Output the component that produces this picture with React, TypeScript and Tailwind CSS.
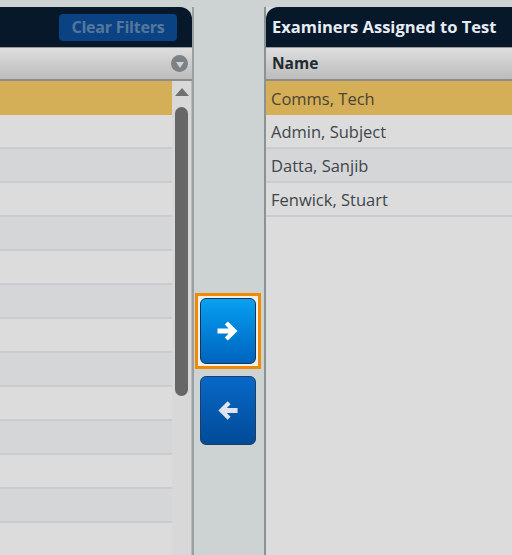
import React from 'react';

const assigned = ['Comms, Tech', 'Admin, Subject', 'Datta, Sanjib', 'Fenwick, Stuart'];

const Arrow: React.FC<{ dir: 'left' | 'right'; className?: string }> = ({ dir, className }) => (
  <svg viewBox="0 0 24 24" className={className} style={{ transform: dir === 'left' ? 'scaleX(-1)' : undefined }}>
    <path d="M1.5 9.4h11.2l-3.9-3.9 3.1-3.1 9.6 9.6-9.6 9.6-3.1-3.1 3.9-3.9H1.5z" fill="currentColor" />
  </svg>
);

export default function App() {
  const leftRows = Array.from({ length: 14 });

  return (
    <div
      className="w-[512px] h-[555px] overflow-hidden bg-[#cdd3d3] flex"
      style={{ fontFamily: '"Open Sans", "Liberation Sans", sans-serif' }}
    >
      {/* Available examiners (cut off) */}
      <div className="w-[194px] shrink-0 mt-[7px] flex flex-col border-r-2 border-[#98a0a2]">
        <div className="h-[40px] bg-[#06182a] rounded-tr-[12px] flex items-center justify-end pr-[15px]">
          <div className="h-[27px] w-[118px] rounded-[4px] bg-[#0b4283] flex items-center justify-center text-[16px] font-bold text-[#56779c] tracking-[-0.2px]">
            Clear Filters
          </div>
        </div>
        <div className="h-[34px] border-t border-[#9a9a9a] border-b-2 border-b-[#8c8c8c] bg-gradient-to-b from-[#dedede] to-[#bcbcbc] flex items-center justify-end pr-[4px]">
          <div className="w-[17px] h-[17px] rounded-full bg-[#7c8186] flex items-center justify-center">
            <div className="w-0 h-0 border-l-[4px] border-r-[4px] border-t-[6px] border-l-transparent border-r-transparent border-t-[#d0d3d6] mt-[2px]" />
          </div>
        </div>
        <div className="flex flex-1 min-h-0">
          <div className="flex-1 flex flex-col">
            {leftRows.map((_, i) => (
              <div
                key={i}
                className={
                  i === 0
                    ? 'h-[34px] shrink-0 bg-[#d4af57] border-b border-[#d4af57]'
                    : i % 2 === 1
                    ? 'h-[34px] shrink-0 bg-[#dcdcdc] border-b-2 border-[#c9cbce]'
                    : 'h-[34px] shrink-0 bg-[#d5d6d8] border-b-2 border-[#c9cbce]'
                }
              />
            ))}
          </div>
          <div className="w-[20px] shrink-0 bg-[#d8d8d8] flex flex-col items-center pt-[7px] border-r border-[#b8bcbe]">
            <div className="w-0 h-0 border-l-[7px] border-r-[7px] border-b-[8px] border-l-transparent border-r-transparent border-b-[#707070]" />
            <div className="w-[13px] h-[289px] mt-[11px] rounded-full bg-[#666666]" />
          </div>
        </div>
      </div>

      {/* Move buttons */}
      <div className="w-[70px] shrink-0 flex flex-col items-center pt-[293px] pr-[3px]">
        <div className="border-[3px] border-[#f18a00] p-[2px] bg-[#eef0f0]">
          <div className="w-[56px] h-[66px] rounded-[6px] border border-[#1b3550] bg-gradient-to-b from-[#0aa0f2] to-[#0064be] flex items-center justify-center text-white">
            <Arrow dir="right" className="w-[24px] h-[24px]" />
          </div>
        </div>
        <div className="mt-[7px] w-[56px] h-[69px] rounded-[6px] border border-[#1e3e66] bg-gradient-to-b from-[#0868c8] to-[#024b98] flex items-center justify-center text-[#dfe4ec]">
          <Arrow dir="left" className="w-[23px] h-[23px]" />
        </div>
      </div>

      {/* Assigned examiners */}
      <div className="flex-1 min-w-[248px] mt-[7px] flex flex-col border-l-2 border-[#8a9294] bg-[#dcdcdc]">
        <div className="h-[40px] bg-[#06182a] rounded-tl-[12px] flex items-center pl-[6px] text-[16.5px] font-bold text-[#e6ecf2] whitespace-nowrap">
          Examiners Assigned to Test
        </div>
        <div className="h-[34px] border-t border-[#9a9a9a] border-b-2 border-b-[#8c8c8c] bg-gradient-to-b from-[#dedede] to-[#bcbcbc] flex items-center pl-[6px] text-[15.5px] font-bold text-[#222a30]">
          Name
        </div>
        {assigned.map((name, i) => (
          <div
            key={name}
            className={
              i === 0
                ? 'h-[34px] shrink-0 bg-[#d4af57] flex items-center pl-[5px] pt-[2px] text-[16.5px] text-[#4a4434]'
                : i % 2 === 1
                ? 'h-[34px] shrink-0 bg-[#dcdcdc] border-b-2 border-[#c9cbce] flex items-center pl-[5px] pt-[2px] text-[16.5px] text-[#40464c]'
                : 'h-[34px] shrink-0 bg-[#d5d6d8] border-b-2 border-[#c9cbce] flex items-center pl-[5px] pt-[2px] text-[16.5px] text-[#40464c]'
            }
          >
            {name}
          </div>
        ))}
      </div>
    </div>
  );
}
